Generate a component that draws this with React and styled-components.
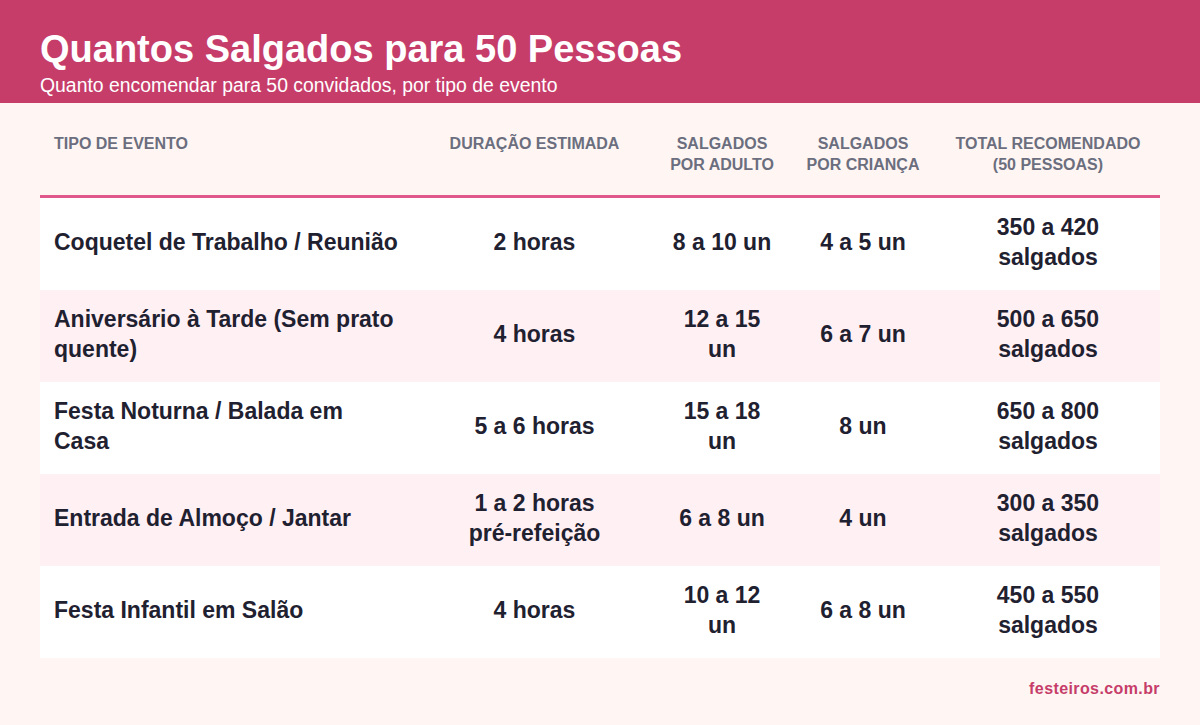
import React from 'react';
import styled, { createGlobalStyle } from 'styled-components';

const GlobalStyle = createGlobalStyle`
  body {
    margin: 0;
    background: #fff6f3;
    font-family: 'Liberation Sans', Arial, sans-serif;
  }
`;

const Page = styled.div`
  width: 1200px;
  min-height: 725px;
  background: #fff6f3;
`;

const Banner = styled.header`
  box-sizing: border-box;
  height: 103px;
  padding: 27px 40px 0;
  background: #c63d6a;
  color: #fff;
`;

const Title = styled.h1`
  margin: 0;
  font-size: 38px;
  line-height: 44px;
  font-weight: 700;
`;

const Subtitle = styled.p`
  margin: 2px 0 0;
  font-size: 19.4px;
  line-height: 24px;
  font-weight: 400;
`;

const Content = styled.main`
  padding: 0 40px;
`;

const Table = styled.table`
  width: 1120px;
  border-collapse: collapse;
  table-layout: fixed;
`;

const HeadCell = styled.th`
  padding: 30px 14px 20px;
  vertical-align: top;
  text-align: ${(p) => (p.$left ? 'left' : 'center')};
  font-size: 16px;
  line-height: 21px;
  font-weight: 700;
  color: #6b6e7e;
  text-transform: uppercase;
  white-space: nowrap;
  border-bottom: 3px solid #e0578b;
`;

const Row = styled.tr`
  height: 92px;
  background: ${(p) => (p.$alt ? '#fff0f4' : '#ffffff')};
`;

const Cell = styled.td`
  padding: 14px ${(p) => p.$pad || 14}px 18px;
  vertical-align: middle;
  text-align: ${(p) => (p.$left ? 'left' : 'center')};
  font-size: 23px;
  line-height: 30px;
  font-weight: 700;
  color: #1f2130;
`;

const Footer = styled.footer`
  padding: 21px 40px 0;
  text-align: right;
  font-size: 16px;
  line-height: 20px;
  font-weight: 700;
  letter-spacing: 0.4px;
  color: #c63d6a;
`;

const columns = [
  { width: 375, lines: ['Tipo de evento'], left: true },
  { width: 239, lines: ['Duração estimada'], pad: 45 },
  { width: 136, lines: ['Salgados', 'por adulto'] },
  { width: 146, lines: ['Salgados', 'por criança'] },
  { width: 224, lines: ['Total recomendado', '(50 pessoas)'] },
];

const rows = [
  ['Coquetel de Trabalho / Reunião', '2 horas', '8 a 10 un', '4 a 5 un', '350 a 420 salgados'],
  ['Aniversário à Tarde (Sem prato quente)', '4 horas', '12 a 15 un', '6 a 7 un', '500 a 650 salgados'],
  ['Festa Noturna / Balada em Casa', '5 a 6 horas', '15 a 18 un', '8 un', '650 a 800 salgados'],
  ['Entrada de Almoço / Jantar', '1 a 2 horas pré-refeição', '6 a 8 un', '4 un', '300 a 350 salgados'],
  ['Festa Infantil em Salão', '4 horas', '10 a 12 un', '6 a 8 un', '450 a 550 salgados'],
];

export default function App() {
  return (
    <Page>
      <GlobalStyle />
      <Banner>
        <Title>Quantos Salgados para 50 Pessoas</Title>
        <Subtitle>Quanto encomendar para 50 convidados, por tipo de evento</Subtitle>
      </Banner>
      <Content>
        <Table>
          <colgroup>
            {columns.map((c, i) => (
              <col key={i} style={{ width: c.width }} />
            ))}
          </colgroup>
          <thead>
            <tr>
              {columns.map((c, i) => (
                <HeadCell key={i} $left={c.left}>
                  {c.lines.map((l, j) => (
                    <div key={j}>{l}</div>
                  ))}
                </HeadCell>
              ))}
            </tr>
          </thead>
          <tbody>
            {rows.map((r, i) => (
              <Row key={i} $alt={i % 2 === 1}>
                {r.map((v, j) => (
                  <Cell key={j} $left={columns[j].left} $pad={columns[j].pad}>
                    {v}
                  </Cell>
                ))}
              </Row>
            ))}
          </tbody>
        </Table>
      </Content>
      <Footer>festeiros.com.br</Footer>
    </Page>
  );
}
